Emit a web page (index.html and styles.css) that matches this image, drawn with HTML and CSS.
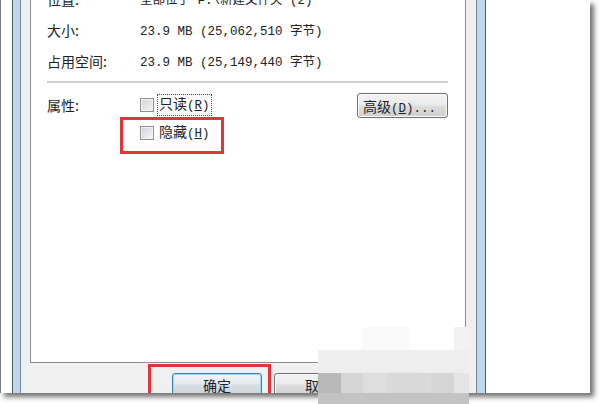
FILE: index.html
```html
<!DOCTYPE html>
<html lang="zh-CN">
<head>
  <meta charset="UTF-8">
  <title>属性</title>
  <link rel="stylesheet" href="styles.css">
</head>
<body>
  <div class="page">
    <div class="photo">
      <div class="win">
        <div class="win-body">
          <div class="tab-page">
            <div class="info-row"><span class="label">位置:</span><span class="value">全部位于 F:\新建文件夹 (2)</span></div>
            <div class="info-row"><span class="label">大小:</span><span class="value">23.9 MB (25,062,510 字节)</span></div>
            <div class="info-row"><span class="label">占用空间:</span><span class="value">23.9 MB (25,149,440 字节)</span></div>
            <div class="sep"></div>
            <div class="attrs">
              <span class="label">属性:</span>
              <div class="checks">
                <label class="check"><span class="box"></span><span class="check-text focus">只读<span class="mono">(<u>R</u>)</span></span></label>
                <label class="check"><span class="box"></span><span class="check-text">隐藏<span class="mono">(<u>H</u>)</span></span></label>
              </div>
              <button class="btn adv">高级<span class="mono">(<u>D</u>)...</span></button>
            </div>
          </div>
          <div class="actions">
            <button class="btn default">确定</button>
            <button class="btn">取消</button>
            <button class="btn">应用<span class="mono">(<u>A</u>)</span></button>
          </div>
        </div>
      </div>
      <div class="mark mark-hide"></div>
      <div class="mark mark-ok"></div>
    </div>

    <!-- pixelated part of the screenshot -->
    <div class="mosaic">
      <span></span><span></span><span class="m1"></span><span class="m1"></span><span></span><span></span><span class="m2"></span>
      <span class="m3"></span><span class="m3"></span><span class="m3"></span><span class="m3"></span><span class="m3"></span><span class="m3"></span><span class="m3"></span>
      <span class="c1"></span><span class="c2"></span><span class="c3"></span><span class="c4"></span><span class="c5"></span><span class="c2"></span><span class="c6"></span>
      <span class="m4"></span><span class="m4"></span><span class="m4"></span><span class="m4"></span><span class="m4"></span><span class="m4"></span><span class="m4"></span>
    </div>
  </div>
</body>
</html>
```

FILE: styles.css
```css
html, body {
  margin: 0;
  padding: 0;
}
body {
  background: #fff;
  font-family: "Noto Sans CJK SC", sans-serif;
  font-size: 14px;
  color: #222;
}
.page {
  position: relative;
  width: 600px;
  height: 404px;
  overflow: hidden;
}
.photo {
  position: relative;
  width: 589px;
  height: 393px;
  border-left: 1px solid #7d7d7d;
  background: #fff;
  overflow: hidden;
  box-shadow: 4px 4px 5px rgba(40, 40, 40, 0.65);
}
.win {
  box-sizing: border-box;
  width: 474px;
  height: 480px;
  margin: -40px 0 0 11px;
  border: 1px solid #4b5866;
  padding: 0 8px 0 7px;
  background: #bdd7f1;
}
.win-body {
  height: 100%;
  border-left: 1px solid #7b8794;
  border-right: 1px solid #7b8794;
  background: #f0f0f0;
  padding: 0 10px 0 9px;
}
.tab-page {
  box-sizing: border-box;
  height: 402px;
  border: 1px solid #898c95;
  background: #fff;
  padding: 21px 17px 0 16px;
}
.info-row {
  display: flex;
  align-items: center;
  height: 31px;
}
.label {
  flex: none;
  width: 93px;
}
.value, .mono {
  font-family: "Liberation Mono", "Noto Sans CJK SC", monospace;
  font-size: 12.5px;
}
.sep {
  height: 2px;
  margin-top: 5px;
  background: #d0d0d0;
}
.attrs {
  display: flex;
  align-items: flex-start;
  margin-top: 8px;
}
.attrs .label {
  line-height: 28px;
}
.checks {
  display: flex;
  flex-direction: column;
}
.check {
  display: flex;
  align-items: center;
  height: 28px;
}
.box {
  box-sizing: border-box;
  width: 14px;
  height: 14px;
  border: 1px solid #8e8f8f;
  background: linear-gradient(135deg, #cdd1d7, #f7f7f7);
  box-shadow: inset 0 0 0 1px #f4f4f4;
}
.check-text {
  margin-left: 3px;
  padding: 0 1px;
  border: 1px dotted transparent;
  line-height: 17px;
}
.check-text.focus {
  border-color: #444;
}
.btn {
  box-sizing: border-box;
  width: 91px;
  height: 23px;
  padding: 0;
  font: inherit;
  color: #222;
  border: 1px solid #707070;
  border-radius: 3px;
  background: linear-gradient(#f2f2f2, #ebebeb 48%, #dddddd 52%, #cfcfcf);
  box-shadow: inset 0 0 0 1px #fcfcfc;
}
.adv {
  margin-left: auto;
  margin-top: 2px;
  height: 25px;
  text-align: left;
  padding-left: 5px;
}
.actions {
  display: flex;
  gap: 12px;
  padding: 10px 0 0 142px;
}
.btn.default {
  border-color: #3c7fb1;
  box-shadow: inset 0 0 0 1px #98dcf8;
  background: linear-gradient(#f2f4f6, #e6eaee 48%, #d6dde3 52%, #cdd4da);
}
.mark {
  position: absolute;
  box-sizing: border-box;
  border: 3px solid #e2353b;
}
.mark-hide {
  left: 119px;
  top: 117px;
  width: 104px;
  height: 37px;
}
.mark-ok {
  left: 147px;
  top: 364px;
  width: 123px;
  height: 40px;
}
.mosaic {
  position: absolute;
  left: 318px;
  top: 327px;
  display: grid;
  grid-template-columns: 23px 22px 23px 23px 22px 23px 15px;
  grid-template-rows: 23px 23px 20px 11px;
}
.m1 { background: #fafafa; }
.m2 { background: #f2f2f2; }
.m3 { background: #eeeeee; }
.m4 { background: #c3c3c3; }
.c1 { background: #b9b9b9; }
.c2 { background: #d6d6d6; }
.c3 { background: #dfdfdf; }
.c4 { background: #dadada; }
.c5 { background: #d9d9d9; }
.c6 { background: #e4e4e4; }
```
